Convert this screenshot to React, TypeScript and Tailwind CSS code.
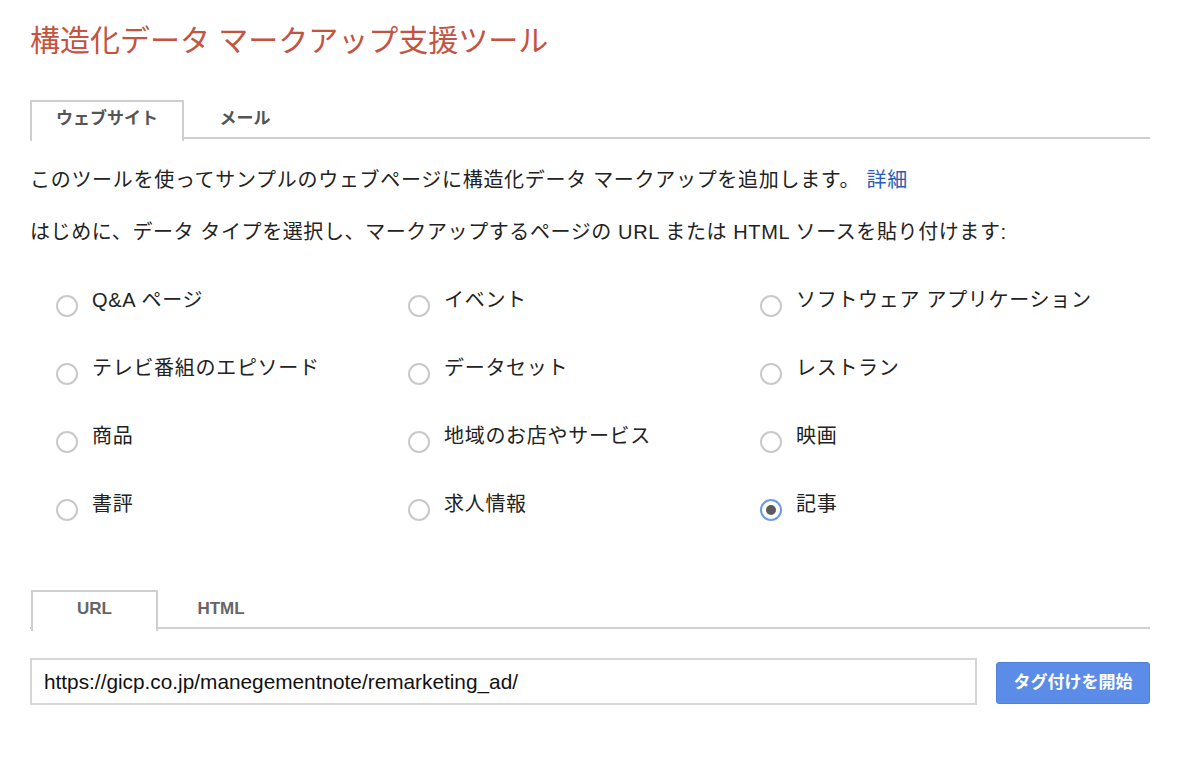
import { useState } from "react"

const types = [
  "Q&A ページ",
  "イベント",
  "ソフトウェア アプリケーション",
  "テレビ番組のエピソード",
  "データセット",
  "レストラン",
  "商品",
  "地域のお店やサービス",
  "映画",
  "書評",
  "求人情報",
  "記事",
]

const font = { fontFamily: '"Liberation Sans", "Noto Sans CJK JP", sans-serif' }

function Radio({ checked }: { checked: boolean }) {
  return (
    <span
      className={
        checked
          ? "mt-[9px] flex h-[22px] w-[22px] shrink-0 items-center justify-center rounded-full border-2 border-[#6c9be8] bg-white"
          : "mt-[9px] flex h-[22px] w-[22px] shrink-0 items-center justify-center rounded-full border-2 border-[#c9c9c9] bg-white"
      }
    >
      {checked && <span className="h-[10px] w-[10px] rounded-full bg-[#5a5a5a]" />}
    </span>
  )
}

export default function App() {
  const [selected, setSelected] = useState("記事")
  const [mode, setMode] = useState<"url" | "html">("url")
  const [source, setSource] = useState<"web" | "mail">("web")

  return (
    <div className="min-h-[764px] w-[1180px] bg-white text-[#222]" style={font}>
      <div className="w-[1150px] pl-[30px] pt-[22px]">
        <h1 className="text-[30px] leading-[38px] font-normal text-[#c4533f]">
          構造化データ マークアップ支援ツール
        </h1>

        {/* source tabs */}
        <div className="mt-[40px] flex h-[39px] border-b-2 border-[#cfcfcf]">
          <button
            onClick={() => setSource("web")}
            className={
              source === "web"
                ? "-mb-[2px] h-[41px] w-[154px] border-2 border-b-0 border-[#cfcfcf] bg-white pb-[5px] text-[17px] font-bold text-[#555]"
                : "h-[39px] w-[154px] pb-[1px] text-[17px] font-bold text-[#555]"
            }
          >
            ウェブサイト
          </button>
          <button
            onClick={() => setSource("mail")}
            className={
              source === "mail"
                ? "-mb-[2px] h-[41px] w-[122px] border-2 border-b-0 border-[#cfcfcf] bg-white pb-[5px] text-[17px] font-bold text-[#555]"
                : "h-[39px] w-[122px] pb-[1px] text-[17px] font-bold text-[#555]"
            }
          >
            メール
          </button>
        </div>

        <p className="mt-[27px] text-[20px] leading-[28px] tracking-[0.7px]">
          このツールを使ってサンプルのウェブページに構造化データ マークアップを追加します。{" "}
          <a href="#" className="text-[#2b5bb8]">
            詳細
          </a>
        </p>
        <p className="mt-[24px] text-[20px] leading-[28px] tracking-[0.6px]">
          はじめに、データ タイプを選択し、マークアップするページの URL または HTML ソースを貼り付けます:
        </p>

        {/* data types */}
        <div className="mt-[40px] grid grid-cols-[352px_352px_1fr] gap-y-[37px] pl-[26px]">
          {types.map((t) => (
            <label
              key={t}
              onClick={() => setSelected(t)}
              className="flex cursor-pointer items-start gap-[14px]"
            >
              <Radio checked={selected === t} />
              <span className="text-[20px] leading-[28px] tracking-[0.7px] text-[#222]">{t}</span>
            </label>
          ))}
        </div>

        {/* url / html tabs */}
        <div className="mt-[69px] flex h-[39px] border-b-2 border-[#cfcfcf]">
          <button
            onClick={() => setMode("url")}
            className={
              mode === "url"
                ? "-mb-[2px] ml-px h-[41px] w-[127px] border-2 border-b-0 border-[#cfcfcf] bg-white pb-[5px] text-[17px] font-bold text-[#666]"
                : "ml-px h-[39px] w-[127px] pb-[1px] text-[17px] font-bold text-[#666]"
            }
          >
            URL
          </button>
          <button
            onClick={() => setMode("html")}
            className={
              mode === "html"
                ? "-mb-[2px] h-[41px] w-[126px] border-2 border-b-0 border-[#cfcfcf] bg-white pb-[5px] text-[17px] font-bold text-[#666]"
                : "h-[39px] w-[126px] pb-[1px] text-[17px] font-bold text-[#666]"
            }
          >
            HTML
          </button>
        </div>

        <div className="mt-[29px] flex items-center gap-[19px]">
          <input
            defaultValue="https://gicp.co.jp/manegementnote/remarketing_ad/"
            className="h-[47px] w-[947px] border-2 border-[#d6d6d6] px-[12px] text-[20.8px] text-[#111] outline-none"
            style={font}
          />
          <button className="mt-[2px] h-[42px] w-[154px] rounded-[3px] border border-[#4f80e0] bg-[#5b8ce8] text-[17px] font-bold text-white">
            タグ付けを開始
          </button>
        </div>
      </div>
    </div>
  )
}
